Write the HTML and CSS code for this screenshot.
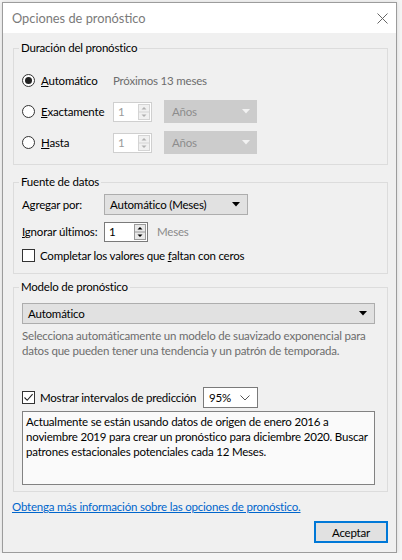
FILE: index.html
```html
<!DOCTYPE html>
<html lang="es">
<head>
<meta charset="utf-8">
<title>Opciones de pronóstico</title>
<link rel="stylesheet" href="styles.css">
</head>
<body>
<div class="window">
  <div class="titlebar">
    <span class="title">Opciones de pronóstico</span>
    <svg class="close" width="11" height="11" viewBox="0 0 11 11"><path d="M0.5 0.5L10.5 10.5M10.5 0.5L0.5 10.5" stroke="#666" stroke-width="1" fill="none"/></svg>
  </div>
  <div class="content">
    <fieldset class="group g1">
      <legend>Duración del pronóstico</legend>
      <div class="row dur">
        <span class="radio checked"></span>
        <span class="rlabel"><u>A</u>utomático</span>
        <span class="muted">Próximos 13 meses</span>
      </div>
      <div class="row dur">
        <span class="radio"></span>
        <span class="rlabel"><u>E</u>xactamente</span>
        <span class="spin disabled"><span class="val">1</span>
          <svg class="spinbtn" width="12" height="16" viewBox="0 0 12 16"><rect x="0.5" y="0.5" width="11" height="15" fill="#f0f0f0" stroke="#d4d4d4"/><line x1="1" y1="8" x2="11" y2="8" stroke="#d4d4d4"/><path d="M3.5 5.5L6 3L8.5 5.5Z" fill="#b0b0b0"/><path d="M3.5 10.5L6 13L8.5 10.5Z" fill="#b0b0b0"/></svg>
        </span>
        <span class="select disabled">Años
          <svg class="arrow" width="8" height="5" viewBox="0 0 8 5"><path d="M0 0H8L4 4.5Z" fill="#f2f2f2"/></svg>
        </span>
      </div>
      <div class="row dur">
        <span class="radio"></span>
        <span class="rlabel"><u>H</u>asta</span>
        <span class="spin disabled"><span class="val">1</span>
          <svg class="spinbtn" width="12" height="16" viewBox="0 0 12 16"><rect x="0.5" y="0.5" width="11" height="15" fill="#f0f0f0" stroke="#d4d4d4"/><line x1="1" y1="8" x2="11" y2="8" stroke="#d4d4d4"/><path d="M3.5 5.5L6 3L8.5 5.5Z" fill="#b0b0b0"/><path d="M3.5 10.5L6 13L8.5 10.5Z" fill="#b0b0b0"/></svg>
        </span>
        <span class="select disabled">Años
          <svg class="arrow" width="8" height="5" viewBox="0 0 8 5"><path d="M0 0H8L4 4.5Z" fill="#f2f2f2"/></svg>
        </span>
      </div>
    </fieldset>

    <fieldset class="group g2">
      <legend>Fuente de datos</legend>
      <div class="row src">
        <span class="flabel">A<u>g</u>regar por:</span>
        <span class="select wide">Automático (Meses)
          <svg class="arrow" width="8" height="5" viewBox="0 0 8 5"><path d="M0 0H8L4 4.5Z" fill="#000"/></svg>
        </span>
      </div>
      <div class="row src">
        <span class="flabel"><u>I</u>gnorar últimos:</span>
        <span class="spin enabled"><span class="val">1</span>
          <svg class="spinbtn" width="12" height="16" viewBox="0 0 12 16"><rect x="0.5" y="0.5" width="11" height="15" fill="#e8e8e8" stroke="#9a9a9a"/><line x1="1" y1="8" x2="11" y2="8" stroke="#9a9a9a"/><path d="M3.5 5.5L6 3L8.5 5.5Z" fill="#000"/><path d="M3.5 10.5L6 13L8.5 10.5Z" fill="#000"/></svg>
        </span>
        <span class="unit">Meses</span>
      </div>
      <div class="row chk">
        <span class="checkbox"></span>
        <span class="clabel">Completar los valores que <u>f</u>altan con ceros</span>
      </div>
    </fieldset>

    <fieldset class="group g3">
      <legend>Modelo de pronóstico</legend>
      <span class="select full">Automático
        <svg class="arrow" width="8" height="5" viewBox="0 0 8 5"><path d="M0 0H8L4 4.5Z" fill="#000"/></svg>
      </span>
      <p class="desc">Selecciona automáticamente un modelo de suavizado exponencial para<br>datos que pueden tener una tendencia y un patrón de temporada.</p>
      <div class="row pred">
        <span class="checkbox checked">
          <svg width="11" height="11" viewBox="0 0 11 11"><path d="M1.5 5.5L4.2 8.3L9.6 2.2" stroke="#222" stroke-width="1.1" fill="none"/></svg>
        </span>
        <span class="clabel predlabel">Mostrar intervalos de predicción</span>
        <span class="select pct">95%
          <svg class="chev" width="10" height="6" viewBox="0 0 10 6"><path d="M0.5 0.5L5 5L9.5 0.5" stroke="#555" stroke-width="1" fill="none"/></svg>
        </span>
      </div>
      <div class="info">Actualmente se están usando datos de origen de enero 2016 a<br>noviembre 2019 para crear un pronóstico para diciembre 2020. Buscar<br>patrones estacionales potenciales cada 12 Meses.</div>
    </fieldset>

    <a class="link" href="#">Obtenga más información sobre las opciones de pronóstico.</a>
    <button class="ok" type="button">Aceptar</button>
  </div>
</div>
</body>
</html>
```

FILE: styles.css
```css
* { box-sizing: border-box; }

body {
  margin: 0;
  background: #f5f5f5;
  font-family: Lato, "Noto Sans", sans-serif;
  font-size: 11.5px;
  letter-spacing: -0.2px;
  color: #000;
}

.window {
  margin: 2px 0 0 2px;
  width: 395px;
  height: 551px;
  border: 1px solid #9c9c9c;
  background: #f0f0f0;
  display: flex;
  flex-direction: column;
  box-shadow: 0 0 5px rgba(0, 0, 0, 0.12);
  white-space: nowrap;
}

.titlebar {
  height: 30px;
  flex: none;
  background: #fff;
  display: flex;
  align-items: center;
  justify-content: space-between;
  padding: 0 8px 0 9px;
}

.title {
  font-size: 12.8px;
  letter-spacing: 0;
  color: #7a7a7a;
}

.content {
  flex: 1;
  display: flex;
  flex-direction: column;
  padding: 7px 8px 0 10px;
}

.group {
  margin: 0;
  border: 1px solid #dcdcdc;
  min-width: 0;
  width: 375px;
}

.group legend {
  padding: 0 2px;
  margin-left: -3px;
  line-height: 16px;
}

.g1 { padding: 9px 8px 6px; }
.g2 { margin-top: 9px; padding: 3px 8px 9px; }
.g3 { margin-top: 5px; padding: 8px 8px 6px; display: flex; flex-direction: column; }

.row {
  display: flex;
  align-items: center;
}

.dur { height: 31px; }

.radio {
  width: 13px;
  height: 13px;
  border: 1px solid #333;
  border-radius: 50%;
  background: #fff;
  display: flex;
  align-items: center;
  justify-content: center;
  flex: none;
}

.radio.checked::after {
  content: "";
  width: 7px;
  height: 7px;
  border-radius: 50%;
  background: #222;
}

.rlabel {
  margin-left: 6px;
  width: 72px;
}

.muted { color: #6d6d6d; }

.spin {
  display: flex;
  align-items: center;
  height: 20px;
  background: #fff;
  flex: none;
  padding-right: 1px;
}

.spin .val {
  flex: 1;
  padding-left: 4px;
}

.spin.disabled {
  width: 39px;
  border: 1px solid #cfcfcf;
  color: #9a9a9a;
}

.spin.enabled {
  width: 44px;
  border: 1px solid #7a7a7a;
}

.select {
  display: flex;
  align-items: center;
  justify-content: space-between;
  flex: none;
}

.select.disabled {
  margin-left: 12px;
  width: 93px;
  height: 23px;
  background: #cccccc;
  border: 1px solid #cccccc;
  color: #8c8c8c;
  padding: 0 6px 0 7px;
}

.src { height: 23px; }
.src + .src { margin-top: 4px; }

.flabel { width: 82px; }

.select.wide {
  width: 144px;
  height: 21px;
  background: #e1e1e1;
  border: 1px solid #adadad;
  padding: 0 7px 0 5px;
}

.unit {
  margin-left: 9px;
  color: #8a8a8a;
}

.chk { height: 17px; margin-top: 4px; }

.checkbox {
  width: 13px;
  height: 13px;
  border: 1px solid #333;
  background: #fff;
  flex: none;
  display: flex;
  align-items: center;
  justify-content: center;
}

.clabel { margin-left: 5px; }

.select.full {
  width: 353px;
  height: 21px;
  background: #e1e1e1;
  border: 1px solid #adadad;
  padding: 0 7px 0 5px;
}

.desc {
  margin: 4px 0 0;
  line-height: 15px;
  color: #6d6d6d;
}

.pred { height: 21px; margin-top: 29px; }

.predlabel { width: 163px; }

.select.pct {
  width: 55px;
  height: 21px;
  background: #fff;
  border: 1px solid #7a7a7a;
  padding: 0 7px 0 5px;
}

.info {
  margin-top: 3px;
  height: 74px;
  width: 353px;
  background: #fafafa;
  border: 1px solid #828282;
  padding: 2px 3px;
  line-height: 15px;
}

.link {
  margin: 7px 0 0 -1px;
  line-height: 16px;
  color: #0066cc;
  text-decoration: underline;
  align-self: flex-start;
}

.ok {
  margin-top: 6px;
  align-self: flex-end;
  width: 74px;
  height: 22px;
  border: 2px solid #0078d7;
  background: #e1e1e1;
  font-family: inherit;
  font-size: 11.5px;
  letter-spacing: -0.2px;
  color: #000;
  padding: 0;
}
```
